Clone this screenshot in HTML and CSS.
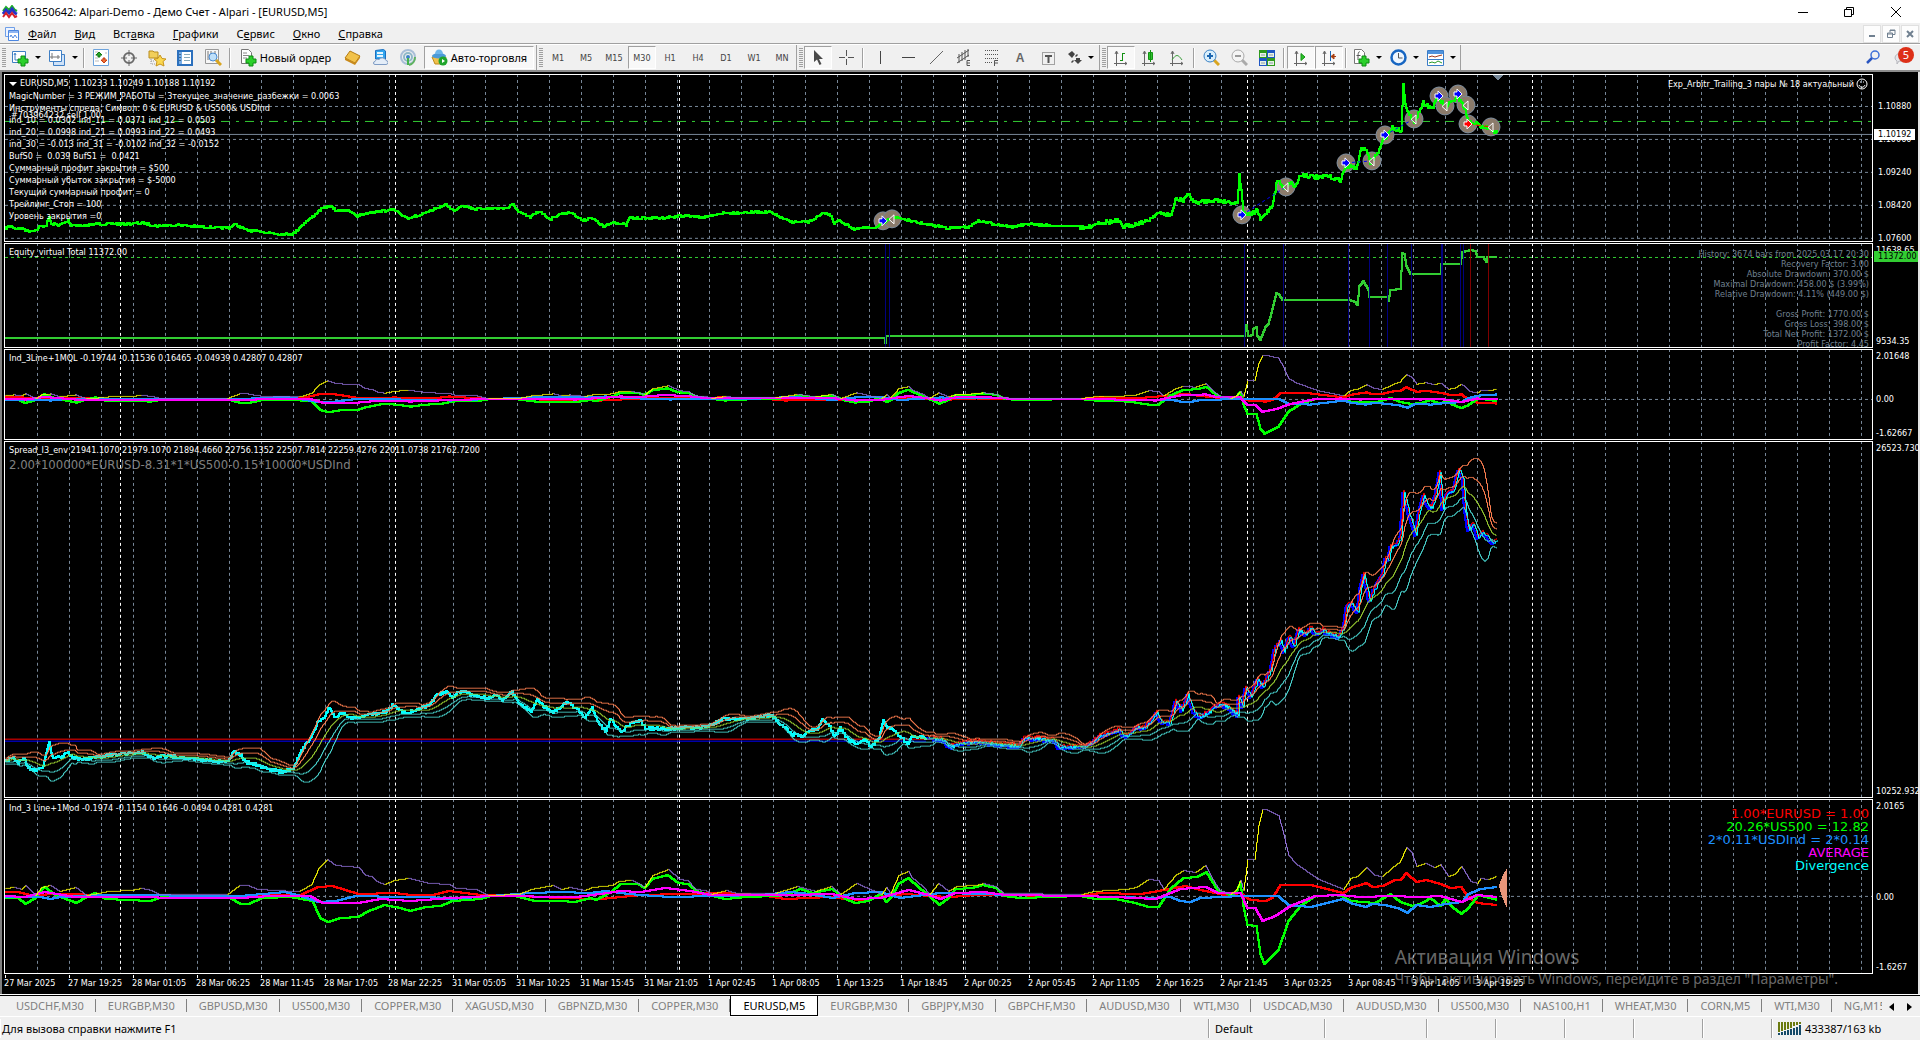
FILE: index.html
```html
<!DOCTYPE html>
<html lang="ru">

<head>
    <meta charset="UTF-8">
    <meta name="viewport" content="width=device-width, initial-scale=1.0">
    <title>16350642: Alpari-Demo - Демо Счет - Alpari - [EURUSD,M5]</title>
    <link rel="stylesheet" href="styles.css">
</head>

<body>
    <header class="titlebar">
        <svg class="app-icon" width="16" height="14" viewBox="0 0 16 14" fill="none">
            <path d="M1 6l3-4 3 3 3-4 3 4 2 1" stroke="#1fae2c" stroke-width="2" />
            <path d="M1 9l3-4 3 3 3-4 3 4 2 1" stroke="#2434c8" stroke-width="3" />
            <path d="M1 12l3-4 3 4 3-4 3 4 2-1" stroke="#d5202a" stroke-width="2" />
        </svg>
        <h1>16350642: Alpari-Demo - Демо Счет - Alpari - [EURUSD,M5]</h1>
        <div class="win-buttons">
            <button aria-label="Свернуть"><svg width="10" height="10"><path d="M0 5.5h10" stroke="#000" /></svg></button>
            <button aria-label="Восстановить"><svg width="10" height="10" fill="none" stroke="#000"><path d="M.5 2.5h7v7h-7zM2.500 2.500v-2h7v7h-2" /></svg></button>
            <button aria-label="Закрыть"><svg width="10" height="10" stroke="#000"><path d="M0 0l10 10M10 0L0 10" /></svg></button>
        </div>
    </header>

    <nav class="menubar">
        <svg width="14" height="14" viewBox="0 0 14 14">
            <path d="M.5 .5h9v9h-9z" fill="#eef4ff" stroke="#6f9fe8" />
            <path d="M3.500 3.500h10v10h-10z" fill="#fff" stroke="#4c86e0" />
            <path d="M4 4h9v2H4z" fill="#8fb5f2" />
            <path d="M5 10l1-2 2 3 2-3 2 3" fill="none" stroke="#4c86e0" />
        </svg>
        <button><u>Ф</u>айл</button>
        <button><u>В</u>ид</button>
        <button>Вст<u>а</u>вка</button>
        <button><u>Г</u>рафики</button>
        <button>С<u>е</u>рвис</button>
        <button><u>О</u>кно</button>
        <button><u>С</u>правка</button>
        <div class="mdi">
            <button aria-label="Свернуть окно"><svg width="8" height="8"><path d="M1 6h6" stroke="#708090" stroke-width="2" /></svg></button>
            <button aria-label="Восстановить окно"><svg width="9" height="9" fill="none" stroke="#708090"><path d="M.5 4h5v4.500h-5zM.5 5h5M3 3.500V1h5v4.500H6M3 1.500h5" /></svg></button>
            <button aria-label="Закрыть окно"><svg width="8" height="8" stroke="#708090" stroke-width="2"><path d="M1 1l6 6M7 1L1 7" /></svg></button>
        </div>
    </nav>

    <div class="toolbar">
        <div class="group">
            <i class="grip"></i>
            <button class="tool drop" aria-label="Новый график">
                <svg width="18" height="18"><path d="M1.500 2.500h13v11h-13z" fill="#fff" stroke="#3f7fc4" /><path d="M4 5v6h8M3 6l1-2 1 2" fill="none" stroke="#3f7fc4" /><path d="M10 7h4v3h3v4h-3v3h-4v-3H7v-4h3z" fill="#2bd02b" stroke="#0c8a12" /></svg>
            </button>
            <button class="tool drop" aria-label="Профили">
                <svg width="18" height="18" fill="#fff" stroke="#3f7fc4"><path d="M5.500 5.500h11v11h-11z" fill="#cfe2f8" /><path d="M1.500 1.500h12v11h-12z" /><path d="M4 4v6M2 8h10M10 6v4" stroke="#777" /></svg>
            </button>
            <i class="sep"></i>
            <button class="tool" aria-label="Обзор рынка">
                <svg width="16" height="17"><path d="M.5 .5h15v16H.5z" fill="#fff" stroke="#6da3dc" /><path d="M2 3h3M2 6h2M2 9h3M2 12h4M12 4h2" stroke="#bbb" /><path d="M6 3l3 3H7v2H5V6H3z" fill="#2aa52a" stroke="#107a10" /><path d="M11 14l-3-3h2V9h2v2h2z" fill="#f0733a" stroke="#c63d11" /></svg>
            </button>
            <button class="tool" aria-label="Окно данных">
                <svg width="16" height="16" fill="none" stroke="#6b6b6b"><circle cx="8" cy="8" r="5" stroke-width="2" /><path d="M8 0v6M8 10v6M0 8h6M10 8h6" /></svg>
            </button>
            <button class="tool" aria-label="Навигатор">
                <svg width="18" height="18"><path d="M1 2h4l1 1h4v6H1z" fill="#f2cf5b" stroke="#b98d1e" /><path d="M3 10v5h4M3 12h3" fill="none" stroke="#999" stroke-dasharray="1 1" /><path d="M12 6l2 3.500 4 .5-3 2.500 1 4.500-4-2-4 2 1-4.500L6 10l4-.5z" fill="#fbd84f" stroke="#c7931b" /></svg>
            </button>
            <button class="tool" aria-label="Терминал">
                <svg width="16" height="16"><path d="M1 1h14v14H1z" fill="#fff" stroke="#2b70bd" stroke-width="2" /><path d="M2 2h3v12H2z" fill="#78aee6" /><path d="M7 4.500h6M7 7.500h6M7 10.500h6" stroke="#8ab" /><path d="M3 4v1M3 7v1M3 10v1" stroke="#123" /></svg>
            </button>
            <button class="tool" aria-label="Тестер стратегий">
                <svg width="17" height="17"><path d="M.5 .5h13v14H.5z" fill="#f7f7f7" stroke="#999" /><path d="M3 2v9M6 2v3M10 2v4" stroke="#777" /><circle cx="8" cy="8" r="4" fill="#bfe0fa" stroke="#4b8bd0" /><path d="M11 11l5 5" stroke="#d9a520" stroke-width="3" /></svg>
            </button>
            <i class="sep"></i>
            <button class="tool text order">
                <svg width="17" height="18"><path d="M1.500 .5h7l3 3v11h-10z" fill="#fff" stroke="#777" /><path d="M3 4h4M3 6.500h6M3 9h4" stroke="#888" /><path d="M9 7h4v3h3v4h-3v3H9v-3H6v-4h3z" fill="#2bd02b" stroke="#0c8a12" /></svg>
                Новый ордер
            </button>
            <button class="tool" aria-label="Маркет">
                <svg width="17" height="15"><path d="M1 8l5-7 10 5-5 7z" fill="#f2c24a" stroke="#b57c12" /><path d="M1 8v2l10 5v-2zM11 13v2l5-7V6z" fill="#c98a1a" /></svg>
            </button>
            <button class="tool" aria-label="Хостинг">
                <svg width="16" height="17"><path d="M3.500 1.500l8-1 2 1.500v8h-10z" fill="#33a6ee" stroke="#1b6fc0" /><path d="M5 4h6M5 7h6" stroke="#e4f5ff" stroke-width="2" /><path d="M3 15.500h11a2 2 0 0 0 0-4 4 4 0 0 0-7-1 3 3 0 0 0-4 2 1.500 1.500 0 0 0 0 3z" fill="#e4edf8" stroke="#7f9cc4" /></svg>
            </button>
            <button class="tool" aria-label="Сигналы">
                <svg width="17" height="17" fill="none"><circle cx="8" cy="8" r="7" stroke="#a9bfd8" stroke-width="2" /><circle cx="8" cy="8" r="4" stroke="#8fb8c8" stroke-width="2" /><path d="M9 16a8 8 0 0 0 6-8" stroke="#5fb35f" stroke-width="2" /><circle cx="8" cy="8" r="2" fill="#3c82c8" /><path d="M8 9v7" stroke="#45b24a" stroke-width="2" /></svg>
            </button>
            <button class="tool text auto pressed">
                <svg width="17" height="17"><path d="M1 8h14l-3 7H4z" fill="#f0c14d" stroke="#c08b1c" /><path d="M1 7a7 3 0 0 1 14 0 7 2.500 0 0 1-14 0z" fill="#4c9ad8" /><path d="M4 5a4 4.500 0 0 1 8 0z" fill="#6fb6ea" /><circle cx="12" cy="12" r="4.500" fill="#1fa52c" /><path d="M11 10l3 2-3 2z" fill="#fff" /></svg>
                Авто-торговля
            </button>
        </div>
        <div class="group">
            <i class="grip"></i>
            <button class="tool tf">M1</button>
            <button class="tool tf">M5</button>
            <button class="tool tf">M15</button>
            <button class="tool tf pressed">M30</button>
            <button class="tool tf">H1</button>
            <button class="tool tf">H4</button>
            <button class="tool tf">D1</button>
            <button class="tool tf">W1</button>
            <button class="tool tf">MN</button>
        </div>
        <div class="group">
            <i class="grip"></i>
            <button class="tool pressed" aria-label="Курсор">
                <svg width="10" height="15"><path d="M1 0v12l3-2.500L6.500 15l2-1L6 9h4z" fill="#4a4a4a" /></svg>
            </button>
            <button class="tool" aria-label="Перекрестие">
                <svg width="15" height="15" stroke="#555"><path d="M7.500 0v6M7.500 9v6M0 7.500h6M9 7.500h6" /></svg>
            </button>
            <i class="sep"></i>
            <button class="tool" aria-label="Вертикальная линия"><svg width="13" height="13" stroke="#444"><path d="M6.500 0v13" /></svg></button>
            <button class="tool" aria-label="Горизонтальная линия"><svg width="13" height="13" stroke="#444"><path d="M0 6.500h13" /></svg></button>
            <button class="tool" aria-label="Трендовая линия"><svg width="13" height="13" stroke="#666"><path d="M0 13L13 0" /></svg></button>
            <button class="tool" aria-label="Канал">
                <svg width="16" height="17" stroke="#555"><path d="M1 9L13 1M1 14L13 6M3 5v9M6 3v9M9 1v10M12 0v8" /><path d="M14 11.500h-3v5h3M11 14h3" fill="none" /></svg>
            </button>
            <button class="tool" aria-label="Фибоначчи">
                <svg width="16" height="17" stroke="#555"><path d="M1 1.500h13M1 5.500h13M1 9.500h13M1 13.500h7" stroke-dasharray="1 1" /><path d="M14 11.500h-3.500V17M11 14h3" fill="none" /></svg>
            </button>
            <button class="tool letter">A</button>
            <button class="tool" aria-label="Метка">
                <svg width="14" height="14"><path d="M1.500 1.500h12v12h-12z" fill="none" stroke="#555" stroke-dasharray="1 1" /><path d="M4 4h7v2H8.500v6h-2V6H4z" fill="#555" /></svg>
            </button>
            <button class="tool drop" aria-label="Фигуры">
                <svg width="14" height="14" fill="#444"><path d="M4 0l3 3-3 4-4-4zM10 13L6 9h8zM8 9h4V7H8zM7 5l2-2 1 1-2 2zM3 11l2-2 1 1-2 2z" /></svg>
            </button>
        </div>
        <div class="group">
            <i class="grip"></i>
            <button class="tool pressed" aria-label="Бары"><svg width="16" height="16" fill="none" stroke="#666"><path d="M3.500 2v14M1 13.500h13M2 4l1.500-3L5 4M12 12l2 1.500L12 15" /><path d="M9.500 3v8M9 3.500h3M7 10.500h2" stroke="#139113" /></svg></button>
            <button class="tool" aria-label="Свечи"><svg width="16" height="16" fill="none" stroke="#666"><path d="M3.500 2v14M1 13.500h13M2 4l1.500-3L5 4M12 12l2 1.500L12 15" /><path d="M9.500 0v12M7.500 2.500h4v7h-4z" fill="#2bc42b" stroke="#139113" /></svg></button>
            <button class="tool" aria-label="Линия"><svg width="16" height="16" fill="none" stroke="#666"><path d="M3.500 2v14M1 13.500h13M2 4l1.500-3L5 4M12 12l2 1.500L12 15" /><path d="M3 10c4-6 6-6 10 0" stroke="#3fa03f" /></svg></button>
            <i class="sep"></i>
            <button class="tool" aria-label="Увеличить"><svg width="17" height="17"><path d="M11 11l5 5" stroke="#d9a520" stroke-width="3" /><circle cx="7" cy="7" r="6" fill="#d8eefc" stroke="#3b82c4" /><path d="M7 4v6M4 7h6" stroke="#1c66b0" stroke-width="2" /></svg></button>
            <button class="tool" aria-label="Уменьшить"><svg width="17" height="17"><path d="M11 11l5 5" stroke="#aaa" stroke-width="3" /><circle cx="7" cy="7" r="6" fill="#f4f4f4" stroke="#aaa" /><path d="M4 7h6" stroke="#999" stroke-width="2" /></svg></button>
            <button class="tool" aria-label="Окна мозаикой"><svg width="16" height="16"><path d="M0 0h8v8H0zM8 8h8v8H8z" fill="#2f9a1d" /><path d="M8 0h8v8H8zM0 8h8v8H0z" fill="#1f57c4" /><path d="M1 3h6v4H1zM9 3h6v4H9zM1 11h6v4H1zM9 11h6v4H9z" fill="#e9f3e4" /><path d="M2 5h4M10 5h4M2 13h4M10 13h4" stroke="#89a" /></svg></button>
            <i class="sep"></i>
            <button class="tool pressed" aria-label="Автопрокрутка"><svg width="16" height="16" fill="none" stroke="#666"><path d="M3.500 2v14M1 13.500h13M2 4l1.500-3L5 4M12 12l2 1.500L12 15" /><path d="M8 3.500v7l4-3.500z" fill="#2bc42b" stroke="#139113" /></svg></button>
            <button class="tool pressed" aria-label="Сдвиг графика"><svg width="16" height="16" fill="none" stroke="#666"><path d="M3.500 2v14M1 13.500h13M2 4l1.500-3L5 4M12 12l2 1.500L12 15" /><path d="M9.500 1v10" stroke="#1b64b4" /><path d="M15 6.500h-4M13 4l-3 2.500L13 9z" fill="#c4501a" stroke="#a33a0c" /></svg></button>
            <i class="sep"></i>
            <button class="tool drop" aria-label="Индикаторы"><svg width="17" height="18"><path d="M1.500 .5h7l3 3v11h-10z" fill="#fff" stroke="#777" /><path d="M7 3c-2-1-2 2-2 8M3.500 6.500h4" fill="none" stroke="#555" /><path d="M9 7h4v3h3v4h-3v3H9v-3H6v-4h3z" fill="#2bd02b" stroke="#0c8a12" /></svg></button>
            <button class="tool drop" aria-label="Периоды"><svg width="17" height="17"><circle cx="8.500" cy="8.500" r="7" fill="#eef6ff" stroke="#1766c2" stroke-width="2.500" /><path d="M8.500 4v5h4" fill="none" stroke="#555" /></svg></button>
            <button class="tool drop" aria-label="Шаблоны"><svg width="17" height="16"><path d="M.5 .5h16v15H.5z" fill="#fff" stroke="#3a7cc8" /><path d="M1 1h15v3H1z" fill="#4f93dc" /><path d="M1 9.500h15" stroke="#3a7cc8" /><path d="M2 7l3-1 3 1 3-1 4-1" fill="none" stroke="#a33a1c" /><path d="M2 13l3-1 3 1 3-2 4 2" fill="none" stroke="#2a9a2a" /></svg></button>
        </div>
        <div class="tool-right">
            <button class="tool" aria-label="Поиск"><svg width="14" height="14" fill="none"><circle cx="9" cy="5" r="4" stroke="#3d6fd8" stroke-width="1.500" /><path d="M6 8l-5 5" stroke="#2a56c0" stroke-width="2.500" /></svg></button>
            <button class="tool chat" aria-label="Сообщения"><svg width="18" height="14"><path d="M2 8a6 5 0 0 1 12 0 6 4 0 0 1-8 3l-2 3v-3a4 4 0 0 1-2-3z" fill="#e6e6ea" stroke="#b6b6bc" /></svg><span class="badge">5</span></button>
        </div>
    </div>

    <main class="charts">
        <section class="pane pane-price">
            <div class="plot">
                <svg id="price" viewBox="4 74 1869 168" preserveAspectRatio="none"></svg>
                <div class="info">
                    <p class="symbol">EURUSD,M5&nbsp; 1.10233 1.10249 1.10188 1.10192</p>
                    <p>MagicNumber = 3 РЕЖИМ_РАБОТЫ = 3текущее_значение_разбежки = 0.0063</p>
                    <p>Инструменты спреда; Символ: 0 &amp; EURUSD &amp; US500&amp; USDInd</p>
                    <p>ind_10 = 0.0302 ind_11 = 0.0371 ind_12 = 0.0503</p>
                    <p>ind_20 = 0.0998 ind_21 = 0.0993 ind_22 = 0.0493</p>
                    <p>ind_30 = -0.013 ind_31 = -0.0102 ind_32 = -0.0152</p>
                    <p>BufS0 =&nbsp; 0.039 BufS1 =&nbsp; 0.0421</p>
                    <p>Суммарный профит закрытия = $500</p>
                    <p>Суммарный убыток закрытия = $-5000</p>
                    <p>Текущий суммарный профит = 0</p>
                    <p>Трейлинг_Стоп = 100</p>
                    <p>Уровень закрытия =0</p>
                </div>
                <p class="order-label">#703964232 sell 1.00</p>
                <p class="expert">Exp_Arbitr_Trailing_3 пары № 18 актуальный
                    <svg width="12" height="12" fill="none" stroke="#fff"><circle cx="6" cy="6" r="5" /><path d="M3 7c1 3 5 3 6 0M4 4h1M7 4h1" /></svg>
                </p>
            </div>
            <div class="scale">
                <span>1.10880</span><span>1.10060</span><span>1.09240</span><span>1.08420</span><span>1.07600</span>
                <span class="tag bid">1.10192</span>
            </div>
        </section>
        <section class="pane">
            <div class="plot">
                <svg id="equity" viewBox="4 243 1869 105" preserveAspectRatio="none"></svg>
                <p class="caption">Equity_virtual Total 11372.00</p>
                <div class="stats">
                    <p>History: 3674 bars from 2025.03.17 20:30</p>
                    <p>Recovery Factor: 3.00</p>
                    <p>Absolute Drawdown: 370.00 $</p>
                    <p>Maximal Drawdown: 458.00 $ (3.99%)</p>
                    <p>Relative Drawdown: 4.11% (449.00 $)</p>
                    <p>&nbsp;</p>
                    <p>Gross Profit: 1770.00 $</p>
                    <p>Gross Loss: 398.00 $</p>
                    <p>Total Net Profit: 1372.00 $</p>
                    <p>Profit Factor: 4.45</p>
                </div>
            </div>
            <div class="scale">
                <span>11638.65</span><span class="last">9534.35</span>
                <span class="tag total">11372.00</span>
            </div>
        </section>
        <section class="pane">
            <div class="plot">
                <svg id="ind1" viewBox="4 349 1869 91" preserveAspectRatio="none"></svg>
                <p class="caption">Ind_3Line+1MQL -0.19744 -0.11536 0.16465 -0.04939 0.42807 0.42807</p>
            </div>
            <div class="scale small"><span>2.01648</span><span class="zero">0.00</span><span>-1.62667</span></div>
        </section>
        <section class="pane">
            <div class="plot">
                <svg id="spread" viewBox="4 441 1869 358" preserveAspectRatio="none"></svg>
                <p class="caption">Spread_I3_env 21941.1070 21979.1070 21894.4660 22756.1352 22507.7814 22259.4276 22011.0738 21762.7200</p>
                <p class="formula">2.00*100000*EURUSD-8.31*1*US500-0.15*10000*USDInd</p>
            </div>
            <div class="scale"><span>26523.730</span><span class="last">10252.932</span></div>
        </section>
        <section class="pane">
            <div class="plot">
                <svg id="ind2" viewBox="4 800 1869 175" preserveAspectRatio="none"></svg>
                <p class="caption">Ind_3 Line+1Mod -0.1974 -0.1154 0.1646 -0.0494 0.4281 0.4281</p>
                <div class="legend">
                    <p class="red">1.00*EURUSD = 1.00</p>
                    <p class="lime">20.26*US500 = 12.82</p>
                    <p class="blue">2*0.11*USDInd = 2*0.14</p>
                    <p class="magenta">AVERAGE</p>
                    <p class="aqua">Divergence</p>
                </div>
            </div>
            <div class="scale large"><span>2.0165</span><span class="zero">0.00</span><span>-1.6267</span></div>
        </section>
        <div class="dates">
            <span>27 Mar 2025</span><span>27 Mar 19:25</span><span>28 Mar 01:05</span><span>28 Mar 06:25</span>
            <span>28 Mar 11:45</span><span>28 Mar 17:05</span><span>28 Mar 22:25</span><span>31 Mar 05:05</span>
            <span>31 Mar 10:25</span><span>31 Mar 15:45</span><span>31 Mar 21:05</span><span>1 Apr 02:45</span>
            <span>1 Apr 08:05</span><span>1 Apr 13:25</span><span>1 Apr 18:45</span><span>2 Apr 00:25</span>
            <span>2 Apr 05:45</span><span>2 Apr 11:05</span><span>2 Apr 16:25</span><span>2 Apr 21:45</span>
            <span>3 Apr 03:25</span><span>3 Apr 08:45</span><span>3 Apr 14:05</span><span>3 Apr 19:25</span>
        </div>
        <div class="activation">
            <p class="big">Активация Windows</p>
            <p>Чтобы активировать Windows, перейдите в раздел "Параметры".</p>
        </div>
    </main>

    <div class="tabs">
        <div class="tab-list">
            <button>USDCHF,M30</button><button>EURGBP,M30</button><button>GBPUSD,M30</button><button>US500,M30</button>
            <button>COPPER,M30</button><button>XAGUSD,M30</button><button>GBPNZD,M30</button><button>COPPER,M30</button>
            <button class="active">EURUSD,M5</button><button>EURGBP,M30</button><button>GBPJPY,M30</button>
            <button>GBPCHF,M30</button><button>AUDUSD,M30</button><button>WTI,M30</button><button>USDCAD,M30</button>
            <button>AUDUSD,M30</button><button>US500,M30</button><button>NAS100,H1</button><button>WHEAT,M30</button>
            <button>CORN,M5</button><button>WTI,M30</button><button>NG,M15</button>
        </div>
        <button class="scroll" aria-label="Влево"><svg width="5" height="8"><path d="M5 0v8L0 4z" /></svg></button>
        <button class="scroll" aria-label="Вправо"><svg width="5" height="8"><path d="M0 0v8l5-4z" /></svg></button>
    </div>

    <footer class="statusbar">
        <span class="help">Для вызова справки нажмите F1</span>
        <span class="profile">Default</span>
        <span class="wide"></span>
        <span></span><span></span><span></span><span></span><span></span>
        <span class="traffic">
            <svg width="23" height="13"><path d="M1 0v10M4 0v9M7 0v8M10 0v7M13 0v6M16 0v4M19 0v3M22 0v2" stroke="#6b7a10" stroke-width="2" /><path d="M1 13v-2M4 13v-3M7 13V9M10 13V8M13 13V7M16 13V6M19 13V5M22 13V3" stroke="#164a68" stroke-width="2" /></svg>
            433387/163 kb
        </span>
    </footer>
    <script src="charts.js"></script>
</body>

</html>
```
FILE: styles.css
```css
* {
    box-sizing: border-box;
}

body {
    margin: 0;
    height: 100vh;
    display: flex;
    flex-direction: column;
    overflow: hidden;
    background-color: #f0f0f0;
    color: #000;
    font-family: "Noto Sans", "Open Sans", sans-serif;
    font-size: 11px;
}

p,
h1 {
    margin: 0;
    font-weight: normal;
    white-space: nowrap;
}

button {
    padding: 0;
    border: 0;
    background: none;
    color: inherit;
    font: inherit;
    white-space: nowrap;
}

svg {
    flex: none;
}

/* title and menu */

.titlebar {
    display: flex;
    align-items: center;
    height: 23px;
    padding-left: 2px;
    background-color: #fff;
}

.titlebar h1 {
    margin-left: 5px;
    font-size: 11px;
    line-height: 23px;
}

.win-buttons {
    display: flex;
    margin-left: auto;
    height: 20px;
}

.win-buttons button {
    display: grid;
    place-items: center;
    width: 46px;
}

.win-buttons button:last-child {
    width: 48px;
}

.menubar {
    display: flex;
    align-items: center;
    height: 22px;
    padding-left: 5px;
    border-bottom: 1px solid #fff;
    box-shadow: inset 0 -1px #a0a0a0;
}

.menubar > button {
    padding: 0 9px;
}

.mdi {
    display: flex;
    gap: 1px;
    margin-left: auto;
    padding-right: 1px;
}

.mdi button {
    display: grid;
    place-items: center;
    width: 18px;
    height: 18px;
    border: 1px solid #e0e0e0;
    background-color: #fdfdfd;
}

/* toolbar */

.toolbar {
    display: flex;
    height: 27px;
    padding-bottom: 2px;
    border-bottom: 2px solid #8c8c8c;
}

.group {
    display: flex;
    align-items: center;
    height: 25px;
    border-right: 1px solid #a0a0a0;
}

.grip {
    width: 4px;
    height: 20px;
    margin: 0 1px 0 2px;
    background: repeating-linear-gradient(#a0a0a0 0 1px, #f0f0f0 1px 2px);
}

.sep {
    width: 2px;
    height: 20px;
    margin: 0 2px;
    background-color: #a0a0a0;
    border-right: 1px solid #fff;
}

.tool {
    display: flex;
    align-items: center;
    justify-content: center;
    width: 28px;
    height: 23px;
}

.drop {
    width: 37px;
    gap: 6px;
}

.drop::after {
    content: "";
    border: 3px solid transparent;
    border-top-color: #000;
    border-bottom: 0;
}

.text {
    gap: 3px;
}

.order {
    width: 105px;
}

.auto {
    width: 110px;
    margin: 0 2px;
}

.tf {
    font: 9px "DejaVu Sans Condensed", "DejaVu Sans", sans-serif;
    color: #444;
}

.letter {
    font: bold 12px "Liberation Sans", sans-serif;
    color: #666;
}

.pressed {
    border: 1px solid #fff;
    border-top-color: #a0a0a0;
    border-left-color: #a0a0a0;
    background-color: #f8f8f8;
}

.tool-right {
    display: flex;
    align-items: center;
    margin-left: auto;
    padding-right: 4px;
}

.chat {
    position: relative;
    width: 29px;
}

.badge {
    position: absolute;
    right: 2px;
    top: 2px;
    width: 16px;
    height: 16px;
    border-radius: 50%;
    background-color: #dd3018;
    color: #fff;
    line-height: 16px;
}

/* chart window */

.charts {
    position: relative;
    flex: 1;
    min-height: 0;
    display: grid;
    grid-template-rows: 168fr 105fr 91fr 358fr 175fr 20px;
    row-gap: 1px;
    padding: 2px 0 0 2px;
    border-left: 2px solid #808080;
    border-right: 2px solid #e3e3e3;
    background-color: #000;
    color: #fff;
    font-family: "DejaVu Sans Condensed", "DejaVu Sans", sans-serif;
    font-size: 9px;
}

.pane {
    display: grid;
    grid-template-columns: 1fr 45px;
    min-height: 0;
}

.plot {
    position: relative;
    min-height: 0;
    overflow: hidden;
}

.plot > svg {
    position: absolute;
    width: 100%;
    height: 100%;
    shape-rendering: crispEdges;
}

.plot::after {
    content: "";
    position: absolute;
    inset: 0;
    border: 1px solid #fff;
}

.info,
.caption,
.order-label,
.expert,
.stats,
.legend,
.formula {
    position: absolute;
    line-height: 12px;
}

.info,
.caption {
    top: 3px;
    left: 5px;
}

.info .symbol {
    margin-bottom: 1px;
    padding-left: 11px;
}

.info .symbol::before {
    content: "";
    position: absolute;
    top: 5px;
    left: 0;
    border: 4px solid transparent;
    border-top-color: #fff;
    border-bottom: 0;
}

.order-label {
    top: 35px;
    left: 7px;
}

.expert {
    display: flex;
    align-items: center;
    gap: 2px;
    top: 4px;
    right: 5px;
}

.stats {
    top: 6px;
    right: 4px;
    color: #708090;
    line-height: 10px;
    text-align: right;
}

.formula {
    top: 18px;
    left: 5px;
    color: #808080;
    font-size: 13px;
}

.legend {
    top: 8px;
    right: 4px;
    font-family: "DejaVu Sans", sans-serif;
    font-size: 13px;
    line-height: 13px;
    text-align: right;
}

.red { color: #f00; }
.lime { color: #0f0; }
.blue { color: #1e90ff; }
.magenta { color: #f0f; }
.aqua { color: #0ff; }

.scale {
    position: relative;
    display: flex;
    flex-direction: column;
    min-height: 0;
    padding-left: 3px;
    line-height: 14px;
    white-space: nowrap;
}

.pane-price .scale {
    padding: 16px 0 0 5px;
    line-height: 33px;
}

.scale .last,
.scale .zero {
    margin-top: auto;
}

.small .zero {
    margin-bottom: 20px;
}

.large .zero {
    margin-bottom: 56px;
}

.scale .tag {
    position: absolute;
    left: 1px;
    padding: 0 4px;
    line-height: 11px;
    background-color: #fff;
    color: #000;
}

.scale .bid {
    top: 55px;
}

.scale .total {
    top: 8px;
    right: 0;
    background-color: #32cd32;
}

.dates {
    display: grid;
    grid-template-columns: repeat(24, minmax(0, 64fr)) minmax(0, 378fr);
    line-height: 16px;
    white-space: nowrap;
}

.dates span {
    background: linear-gradient(#fff, #fff) 1px 0 / 1px 3px no-repeat;
}

.activation {
    position: absolute;
    right: 80px;
    bottom: 7px;
    color: rgba(255, 255, 255, 0.42);
    font: 14px/18px "Noto Sans", "Open Sans", sans-serif;
}

.activation .big {
    font-size: 19px;
    line-height: 26px;
}

/* chart tabs */

.tabs {
    display: flex;
    align-items: center;
    height: 22px;
    padding: 0 2px 0 4px;
    border-top: 1px solid #000;
    border-bottom: 1px solid #fff;
    box-shadow: 0 -1px #fff;
    z-index: 1;
}

.tab-list {
    flex: 1;
    min-width: 0;
    display: flex;
    height: 20px;
    overflow: hidden;
    align-items: flex-start;
}

.tab-list button {
    position: relative;
    flex: none;
    padding: 0 12px;
    color: #808080;
    line-height: 19px;
}

.tab-list button:not(.active)::after {
    content: "";
    position: absolute;
    right: 0;
    top: 3px;
    height: 13px;
    border-right: 1px solid #808080;
}

.tab-list .active {
    border: 1px solid #000;
    border-top: 0;
    background-color: #fff;
    color: #000;
}

.scroll {
    width: 18px;
}

/* status bar */

.statusbar {
    display: flex;
    align-items: stretch;
    height: 23px;
    padding: 2px 0;
    line-height: 19px;
}

.statusbar span {
    width: 69px;
    border-left: 1px solid #a0a0a0;
    box-shadow: inset 1px 0 #fff;
}

.statusbar .help {
    flex: 1;
    padding-left: 2px;
    border: 0;
}

.statusbar .profile {
    width: 116px;
    padding-left: 6px;
}

.statusbar .wide {
    width: 102px;
}

.statusbar .traffic {
    display: flex;
    align-items: center;
    gap: 4px;
    width: 149px;
    padding-left: 6px;
}
```
FILE: charts.js
```js
const GRID = '#778899';
const dayStarts = [120, 395, 679, 963, 1247, 1532];

// pairs of x, y
const price = [5,228,11,226,16,229,21,228,27,231,36,230,39,227,46,225,49,217,51,224,59,225,68,221,71,225,82,226,96,224,121,224,143,223,154,226,179,225,200,227,229,228,234,224,246,230,264,232,279,234,293,234,304,223,314,215,321,209,330,206,336,211,346,210,357,216,371,212,393,210,407,218,421,215,439,207,446,205,454,211,461,205,475,209,507,208,513,204,518,212,530,217,539,211,550,219,563,213,572,213,583,221,590,217,604,227,613,222,626,225,629,218,661,218,679,216,708,217,722,213,769,212,790,222,808,222,824,213,831,216,834,224,838,220,854,229,876,227,883,223,894,217,919,223,947,228,969,227,977,221,1011,227,1029,224,1054,226,1079,227,1084,229,1097,223,1117,221,1123,227,1147,221,1157,213,1171,215,1175,200,1183,200,1187,194,1195,203,1213,200,1237,203,1239,173,1242,200,1243,213,1250,215,1257,210,1260,220,1272,205,1277,180,1283,188,1290,182,1295,187,1300,175,1310,176,1320,178,1327,176,1340,180,1345,167,1357,167,1360,150,1365,148,1370,163,1378,152,1383,140,1392,128,1401,131,1403,83,1405,103,1408,113,1413,123,1423,103,1432,108,1438,97,1445,108,1457,97,1465,110,1468,122,1475,123,1480,127,1488,128,1497,133];
const equity = [5,338,884,338,885,343,886,336,1244,336,1246,325,1248,336,1252,335,1253,329,1256,327,1257,336,1260,340,1265,327,1268,324,1272,309,1274,301,1276,293,1279,295,1282,300,1349,300,1355,302,1357,305,1359,286,1363,281,1368,290,1369,297,1387,297,1388,301,1390,290,1400,289,1402,253,1404,254,1406,266,1410,274,1440,274,1441,264,1460,264,1462,252,1471,250,1475,251,1477,257,1483,257,1486,262,1487,257,1497,257];
const spread = [5,761,12,757,18,763,24,757,27,767,35,771,43,766,49,743,52,757,61,757,67,752,73,758,88,759,98,757,110,755,127,754,141,752,153,759,163,756,180,757,204,760,227,762,233,752,241,755,245,762,255,764,265,768,282,772,293,768,300,753,306,744,311,737,318,720,322,720,329,708,335,718,341,713,351,718,361,718,371,714,386,712,392,705,402,712,408,713,420,708,429,705,437,695,447,692,453,698,459,691,473,695,486,698,496,695,502,700,512,692,518,703,531,712,537,700,551,713,559,708,567,702,578,710,584,718,592,708,598,723,606,732,610,718,620,732,631,723,640,720,645,728,664,729,681,728,707,727,722,719,746,719,771,715,779,723,791,734,803,736,811,730,818,728,822,720,830,727,834,737,840,728,848,740,856,743,864,739,871,747,879,738,883,720,887,727,895,732,901,737,907,745,911,737,926,738,942,740,949,747,962,743,979,742,999,745,1018,746,1024,738,1040,739,1052,740,1058,747,1081,747,1091,744,1097,737,1118,730,1126,737,1136,727,1144,728,1156,712,1160,722,1169,723,1175,702,1181,710,1187,695,1193,712,1199,717,1211,710,1220,703,1228,708,1237,715,1238,697,1242,707,1245,688,1250,697,1257,680,1262,687,1270,670,1274,650,1280,640,1283,652,1289,637,1293,647,1298,630,1305,634,1310,628,1316,635,1322,630,1328,633,1338,637,1343,627,1346,607,1350,603,1357,612,1360,587,1363,573,1369,602,1373,590,1382,573,1385,557,1388,560,1390,547,1395,546,1400,537,1403,492,1407,508,1411,523,1415,535,1418,513,1423,495,1427,505,1431,508,1435,495,1439,472,1442,508,1446,493,1453,490,1458,470,1462,477,1465,513,1468,530,1472,523,1477,537,1482,533,1487,537,1492,543,1496,540];

// indicator lines: x, distance above zero
const lines = {
    divergence: [5,8,14,9,21,7,25,11,35,1,41,9,50,11,59,5,75,9,86,1,98,3,108,5,131,6,141,8,151,6,159,2,227,2,239,11,247,11,257,7,294,5,299,5,311,12,318,28,327,37,335,31,358,29,365,21,371,20,376,15,384,12,394,16,408,18,429,13,449,12,455,8,476,7,488,1,518,2,531,7,553,11,561,7,569,9,584,6,592,9,612,11,618,15,631,16,640,12,644,9,652,21,668,27,679,17,687,16,695,7,705,6,711,2,726,6,736,3,775,3,797,10,815,5,831,10,840,2,856,13,881,2,886,9,890,3,898,21,908,25,911,19,922,10,929,2,938,13,948,5,956,10,975,11,983,13,995,10,1003,3,1081,2,1093,5,1126,7,1136,9,1148,17,1158,16,1163,7,1175,21,1183,26,1195,24,1205,31,1211,19,1219,6,1230,2,1236,7,1240,16,1243,6,1247,37,1254,37,1258,71,1262,87,1265,87,1278,81,1282,66,1288,41,1296,32,1318,17,1343,7,1350,18,1357,20,1366,29,1374,21,1382,20,1392,29,1399,34,1406,49,1411,44,1416,30,1425,33,1434,29,1440,32,1448,20,1454,22,1461,30,1470,15,1477,13,1480,18,1488,17,1496,20],
    red: [5,4,18,4,30,1,60,2,75,2,90,1,240,0,300,1,318,9,332,10,345,6,358,2,395,3,410,1,432,1,449,5,480,1,520,0,560,-2,600,-3,640,1,720,3,760,1,785,-3,830,-1,845,-3,865,-4,885,0,905,2,930,0,950,-1,975,1,1080,0,1100,3,1140,2,1158,5,1185,10,1200,6,1225,1,1240,3,1250,-4,1265,-5,1272,-2,1280,11,1310,11,1343,3,1350,8,1366,13,1372,9,1382,10,1395,16,1400,16,1406,23,1416,14,1426,16,1440,12,1450,8,1461,9,1467,0,1477,-7,1497,-9],
    green: [5,-2,18,-2,25,-8,35,-2,44,9,55,1,76,-7,86,-1,95,3,105,-3,150,-5,162,-1,230,-2,240,-8,248,-8,262,-2,290,-1,312,-5,320,-22,328,-26,340,-22,358,-21,366,-16,384,-9,400,-12,410,-15,425,-11,440,-10,452,-5,480,-3,490,0,515,0,535,-5,560,-5,575,-6,590,-2,596,-4,612,5,620,12,638,12,644,8,652,17,667,21,678,13,688,12,696,5,712,0,725,-3,745,-1,775,0,790,3,800,7,812,3,832,7,845,-3,855,-7,868,-5,880,2,886,-6,891,-1,898,12,908,18,918,9,930,-1,939,-9,948,-2,955,7,972,8,982,11,996,8,1004,0,1020,-2,1080,0,1095,-3,1115,-3,1135,-7,1148,-11,1158,-11,1170,7,1183,18,1197,19,1206,24,1217,6,1230,1,1236,4,1240,14,1243,-10,1247,-29,1256,-30,1260,-58,1264,-68,1278,-54,1288,-25,1300,-10,1315,0,1340,1,1350,-5,1375,-7,1390,2,1400,-6,1412,-10,1422,-7,1430,-2,1440,-10,1445,-3,1452,-11,1461,-18,1468,-12,1478,1,1497,-4],
    blue: [5,-1,40,-1,50,-3,60,-1,100,1,240,0,285,4,300,0,318,-6,335,-5,355,0,400,-1,430,-1,450,-3,490,0,530,3,560,4,590,3,605,5,620,3,640,1,670,-1,760,1,790,4,810,2,832,-2,855,3,880,4,900,-2,915,0,940,3,985,2,1005,1,1080,0,1150,-2,1170,-1,1180,-5,1190,-6,1200,-2,1240,0,1278,0,1288,-9,1310,-11,1343,-3,1350,-7,1365,-11,1372,-8,1385,-9,1400,-13,1407,-17,1416,-9,1430,-11,1445,-8,1462,-6,1468,2,1480,7,1497,9],
    magenta: [5,0,25,-1,44,4,75,-1,240,-2,270,0,310,0,322,-7,358,-7,380,-3,410,-5,450,-2,490,0,575,-1,600,2,620,5,640,4,665,8,690,5,710,1,790,1,831,2,855,-3,880,-2,890,1,908,6,925,2,940,-3,955,3,983,4,1005,1,1080,0,1115,-1,1155,-3,1180,7,1205,9,1218,3,1240,3,1247,-12,1255,-12,1262,-25,1275,-20,1290,-10,1315,0,1340,1,1360,-1,1390,0,1420,-1,1440,0,1461,-6,1477,1,1497,-1]
};

const deals = [
    [883, 221, 'buy'], [892, 219, 'close'], [1242, 215, 'buy'], [1286, 187, 'close'], [1346, 163, 'buy'],
    [1372, 161, 'close'], [1385, 135, 'buy'], [1414, 119, 'close'], [1439, 96, 'buy'], [1445, 106, 'close'],
    [1458, 94, 'buy'], [1466, 105, 'close'], [1468, 124, 'sell'], [1491, 127, 'close']
];

let seed = 7;
function rand() {
    seed = (seed * 16807) % 2147483647;
    return seed / 2147483647 - 0.5;
}

// one value for every pixel column
function sample(points, noise) {
    const out = [];
    for (let i = 0; i + 3 < points.length; i += 2) {
        const [x0, y0, x1, y1] = points.slice(i, i + 4);
        for (let x = x0; x < x1; x++) {
            out.push([x, y0 + (y1 - y0) * (x - x0) / (x1 - x0) + rand() * noise]);
        }
    }
    out.push(points.slice(-2));
    return out;
}

function path(pts, color, width, extra = '') {
    const d = pts.map(([x, y], i) => i ? `H${x}V${Math.round(y)}` : `M${x} ${Math.round(y)}`).join('');
    return `<path d="${d}" fill="none" stroke="${color}" stroke-width="${width}" ${extra}/>`;
}

function hline(y, color, dash, x2 = 1872) {
    return `<path d="M5 ${y + 0.5}H${x2}" stroke="${color}" stroke-dasharray="${dash}"/>`;
}

function vline(x, top, bottom, color, dash = '') {
    return `<path d="M${x + 0.5} ${top}V${bottom}" stroke="${color}" stroke-dasharray="${dash}"/>`;
}

function grid(top, bottom) {
    let s = '';
    for (let x = 37; x < 1872; x += 32) s += vline(x, top, bottom, GRID, '3 3');
    dayStarts.forEach(x => s += vline(x, top, bottom, '#fff', '3 3'));
    return s;
}

function draw(id, content) {
    document.getElementById(id).innerHTML = content;
}

function drawPrice() {
    let s = grid(74, 242);
    [106, 139, 172, 205, 238].forEach(y => s += hline(y, GRID, '3 3'));
    s += hline(121, '#32cd32', '9 6 3 6') + hline(134, GRID, '');
    s += '<path d="M1492 75h11l-5 6z" fill="#778899"/>';
    deals.forEach(([x, y]) => s += `<circle cx="${x}" cy="${y}" r="9" fill="#8b7b6b" stroke="#778899"/>`);
    const left = sample(price.slice(0, price.indexOf(1079)), 2);
    const right = sample(price.slice(price.indexOf(1079)), 4);
    s += path(left.concat(right), '#0f0', 2);
    s += '<path d="M1242 215L1286 187M1346 163l26-2M1385 135l29-16" stroke="#00f" stroke-dasharray="3 3"/>';
    s += '<path d="M1468 124l23 3" stroke="#f00" stroke-dasharray="5 3"/>';
    deals.forEach(([x, y, type]) => {
        if (type === 'close') {
            s += `<path d="M${x + 2} ${y - 4}v9l-5-4.500z" fill="#8b7b6b" stroke="#fff"/>`;
        } else {
            s += `<path d="M${x - 4} ${y - 2}h3v-3l5 5-5 5v-3h-3z" fill="${type === 'buy' ? '#00f' : '#f00'}" stroke="#fff"/>`;
        }
    });
    draw('price', s);
}

function drawEquity() {
    let s = grid(243, 348) + hline(257, '#32cd32', '3 3');
    s += path(sample(equity, 0), '#32cd32', 2);
    [885, 889, 1244, 1283, 1348, 1369, 1387, 1411, 1441, 1442, 1460, 1463].forEach(x => s += vline(x, 244, 347, '#000080'));
    [1470, 1488].forEach(x => s += vline(x, 244, 347, '#800000'));
    draw('equity', s);
}

function indicator(zero, k) {
    let s = hline(zero, GRID, '3 3');
    const line = (name, color) => path(sample(lines[name], 0).map(([x, v]) => [x, zero - v * k]), color, 2);
    s += line('red', '#f00') + line('green', '#0f0') + line('blue', '#1e90ff') + line('magenta', '#f0f');
    // yellow while it widens, purple while it narrows
    const d = lines.divergence;
    for (let i = 0; i + 3 < d.length; i += 2) {
        const color = d[i + 3] > d[i + 1] ? '#ff0' : '#9370db';
        const part = sample(d.slice(i, i + 4), 0).map(([x, v]) => [x, zero - v * k]);
        s += path(part, color, 1, 'transform="translate(.5 .5)"');
    }
    return s;
}

function drawSpread() {
    const pts = sample(spread, 3);
    const period = 26;
    const smooth = sample(spread, 0);
    const bands = smooth.map(([x], i) => {
        const part = smooth.slice(Math.max(0, i - period), i + 1).map(p => p[1]);
        const mean = part.reduce((a, b) => a + b) / part.length;
        const dev = Math.sqrt(part.reduce((a, b) => a + (b - mean) ** 2, 0) / part.length) + 1.5;
        return { x, mean, dev };
    });
    let s = grid(441, 799);
    s += hline(739, '#f00', '', 926) + hline(741, '#00f', '', 926);
    const late = pts.filter(p => p[0] > 926);
    s += path(late.map(([x, y]) => [x - 1, y + 1]), '#00f', 2);
    s += path(late.map(([x, y]) => [x, y - 2]), '#f00', 1, 'transform="translate(.5 .5)"');
    s += path(pts.filter(p => p[0] <= 926), '#0ff', 2);
    s += path(late.map(([x, y]) => [x + 1, y]), '#0ff', 1, 'transform="translate(.5 .5)"');
    [[-2, '#ff7f50'], [-1, '#ff7f50'], [0, '#9acd32'], [1, '#48d1cc'], [2, '#48d1cc']].forEach(([k, color]) => {
        s += path(bands.map(b => [b.x, b.mean + k * b.dev * 0.9]), color, 1, 'transform="translate(.5 .5)"');
    });
    draw('spread', s);
}

drawPrice();
drawEquity();
draw('ind1', grid(349, 440) + indicator(399, 0.51));
drawSpread();
draw('ind2', grid(800, 975) + indicator(897, 1) + '<path d="M1507 869q-6 10-8 18 2 10 8 22z" fill="#e9967a"/>');
```
